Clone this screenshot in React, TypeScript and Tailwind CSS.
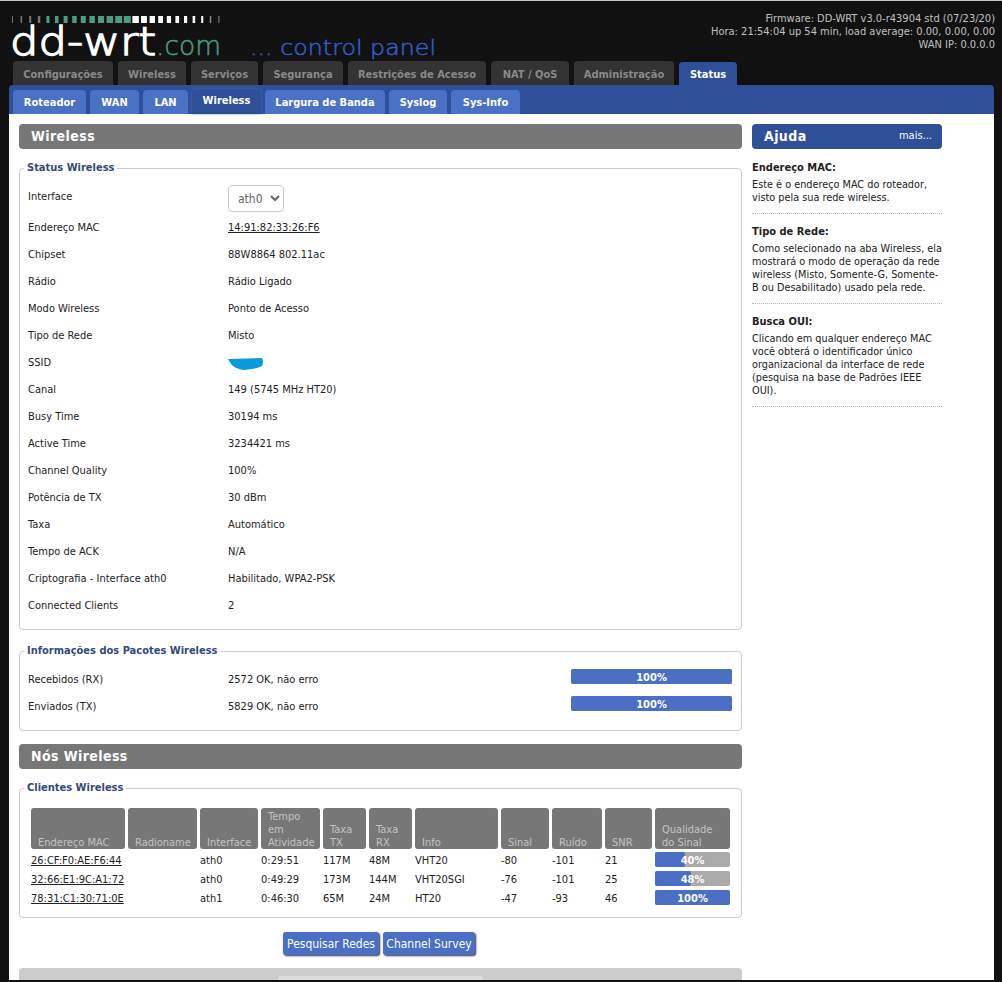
const mainTabs = [
  { label: 'Configurações', w: 'w-[100px]' },
  { label: 'Wireless', w: 'w-[68px]' },
  { label: 'Serviços', w: 'w-[67px]' },
  { label: 'Segurança', w: 'w-[80px]' },
  { label: 'Restrições de Acesso', w: 'w-[138px]' },
  { label: 'NAT / QoS', w: 'w-[78px]' },
  { label: 'Administração', w: 'w-[100px]' },
]

const subTabs = [
  { label: 'Roteador', w: 'w-[73px]' },
  { label: 'WAN', w: 'w-[49px]' },
  { label: 'LAN', w: 'w-[45px]' },
  { label: 'Wireless', w: 'w-[69px]', active: true },
  { label: 'Largura de Banda', w: 'w-[120px]' },
  { label: 'Syslog', w: 'w-[58px]' },
  { label: 'Sys-Info', w: 'w-[69px]' },
]

const statusRows = [
  ['Chipset', '88W8864 802.11ac'],
  ['Rádio', 'Rádio Ligado'],
  ['Modo Wireless', 'Ponto de Acesso'],
  ['Tipo de Rede', 'Misto'],
  ['SSID', ''],
  ['Canal', '149 (5745 MHz HT20)'],
  ['Busy Time', '30194 ms'],
  ['Active Time', '3234421 ms'],
  ['Channel Quality', '100%'],
  ['Potência de TX', '30 dBm'],
  ['Taxa', 'Automático'],
  ['Tempo de ACK', 'N/A'],
  ['Criptografia - Interface ath0', 'Habilitado, WPA2-PSK'],
  ['Connected Clients', '2'],
]

const clientHeaders = [
  ['Endereço MAC'],
  ['Radioname'],
  ['Interface'],
  ['Tempo', 'em', 'Atividade'],
  ['Taxa', 'TX'],
  ['Taxa', 'RX'],
  ['Info'],
  ['Sinal'],
  ['Ruído'],
  ['SNR'],
  ['Qualidade', 'do Sinal'],
]

const clients = [
  { mac: '26:CF:F0:AE:F6:44', iface: 'ath0', up: '0:29:51', tx: '117M', rx: '48M', info: 'VHT20', sig: '-80', noise: '-101', snr: '21', q: 40 },
  { mac: '32:66:E1:9C:A1:72', iface: 'ath0', up: '0:49:29', tx: '173M', rx: '144M', info: 'VHT20SGI', sig: '-76', noise: '-101', snr: '25', q: 48 },
  { mac: '78:31:C1:30:71:0E', iface: 'ath1', up: '0:46:30', tx: '65M', rx: '24M', info: 'HT20', sig: '-47', noise: '-93', snr: '46', q: 100 },
]

const COLS = 'grid grid-cols-[94px_69px_58px_59px_43px_43px_83px_48px_50px_47px_75px] gap-x-[3px]'

// Tick strip above the logo
function logoTicks() {
  const ticks = []
  for (let i = 0; i < 25; i++) {
    const w = i < 13 ? 1 + i * 0.5 : Math.max(1, 7 - (i - 13) * 0.55)
    const fill = i < 4 ? '#777' : i < 14 ? '#4f9a85' : '#fff'
    ticks.push(<rect key={i} x={12 + i * 8.6} y={15} width={w} height={7} fill={i > 22 ? '#888' : fill} />)
  }
  return ticks
}

function Logo() {
  return (
    <svg width="450" height="60" viewBox="0 0 450 60" className="shrink-0 overflow-visible font-stretch-normal">
      {logoTicks()}
      <text x="10" y="54" fontFamily="'DejaVu Sans', sans-serif" fontWeight="200" fontSize="39" fill="#fff" stroke="#fff" strokeWidth="1.4" textLength="146" lengthAdjust="spacingAndGlyphs">dd-wrt</text>
      <text x="156" y="54" fontFamily="'DejaVu Sans', sans-serif" fontWeight="200" fontSize="27" fill="#4f9a85" stroke="#4f9a85" strokeWidth="0.5" textLength="65" lengthAdjust="spacingAndGlyphs">.com</text>
      <text x="250" y="54" fontFamily="'DejaVu Sans', sans-serif" fontWeight="200" fontSize="22" fill="#2f5fc8" stroke="#2f5fc8" strokeWidth="0.5" textLength="186" lengthAdjust="spacingAndGlyphs">... control panel</text>
    </svg>
  )
}

function SectionTitle({ children }: { children: string }) {
  return (
    <div className="h-[25px] rounded-[4px] bg-[#777777] pl-[12px] text-[14px] leading-[25px] font-bold tracking-[0.4px] text-white">
      {children}
    </div>
  )
}

function Box({ title, className, children }: { title: string; className: string; children: React.ReactNode }) {
  return (
    <fieldset className={`rounded-[4px] border border-[#cccccc] pl-2 ${className}`}>
      <legend className="ml-[-4px] px-[3px] text-[11px] leading-[14px] font-bold text-[#34497a]">{title}</legend>
      {children}
    </fieldset>
  )
}

function Row({ label, children }: { label: string; children?: React.ReactNode }) {
  return (
    <div className="flex h-[27px] items-center">
      <span className="w-[200px] shrink-0">{label}</span>
      {children}
    </div>
  )
}

function Bar({ percent, className }: { percent: number; className: string }) {
  return (
    <div className={`relative rounded-[2px] bg-[#aaaaaa] ${className}`}>
      <div className="h-full rounded-[2px] bg-[#4a6fc4]" style={{ width: `${percent}%` }} />
      <span className="absolute inset-0 text-center leading-[17px] font-bold text-white">{percent}%</span>
    </div>
  )
}

function HelpItem({ title, lines }: { title: string; lines: string[] }) {
  return (
    <div className="mb-[11px] border-b border-dotted border-[#bbbbbb] pb-[9px]">
      <h4 className="mb-[3px] text-[11px] leading-[14px] font-bold text-[#222]">{title}</h4>
      {lines.map((l) => (
        <div key={l} className="text-[10.8px] leading-[13px] whitespace-nowrap">{l}</div>
      ))}
    </div>
  )
}

export default function App() {
  return (
    <div className="h-[982px] overflow-hidden border-t border-[#cccccc] bg-[#111111] font-['DejaVu_Sans',sans-serif] text-[11px] font-stretch-condensed text-[#222]">
      <header className="flex h-[60px] justify-between pr-[7px]">
        <Logo />
        <div className="pt-[11px] text-right text-[11px] leading-[13px] text-[#c0c0c0]">
          <div>Firmware: DD-WRT v3.0-r43904 std (07/23/20)</div>
          <div>Hora: 21:54:04 up 54 min, load average: 0.00, 0.00, 0.00</div>
          <div>WAN IP: 0.0.0.0</div>
        </div>
      </header>

      <nav className="flex h-[24px] items-end gap-[5px] pl-[13px]">
        {mainTabs.map((t) => (
          <div key={t.label} className={`h-[24px] rounded-t-[4px] bg-[#333333] text-center text-[11px] leading-[27px] font-bold text-[#8a8a8a] ${t.w}`}>
            {t.label}
          </div>
        ))}
        <div className="h-[23px] w-[58px] rounded-t-[4px] bg-[#2f5099] text-center text-[11px] leading-[26px] font-bold text-white">Status</div>
      </nav>

      <div className="mr-[8px] ml-[9px] h-[895px] overflow-hidden rounded-t-[4px] bg-[#2f5099]">
        <div className="flex h-[29px] items-end gap-[4px] pl-[4px]">
          {subTabs.map((t) => (
            <div
              key={t.label}
              className={`rounded-t-[4px] text-center text-[11px] font-bold text-white ${t.w} ${
                t.active ? 'h-[25px] bg-[#2f5099] leading-[24px] shadow-[0_0_2px_#4a6fc4]' : 'h-[24px] bg-[#4a72c4] leading-[26px]'
              }`}
            >
              {t.label}
            </div>
          ))}
        </div>

        <div className="flex h-[866px] gap-[10px] overflow-hidden bg-white px-[10px] pt-[10px]">
          <main className="w-[723px] shrink-0">
            <SectionTitle>Wireless</SectionTitle>

            <Box title="Status Wireless" className="mt-[12px] pb-[9px]">
              <div className="flex h-[40px] pt-[10px]">
                <span className="mt-[4px] w-[200px] shrink-0">Interface</span>
                <select className="h-[27px] w-[56px] rounded-[4px] border border-[#cccccc] bg-white pl-[5px] text-[12px] text-[#666]">
                  <option>ath0</option>
                </select>
              </div>
              <Row label="Endereço MAC">
                <a className="underline">14:91:82:33:26:F6</a>
              </Row>
              {statusRows.map(([label, value]) => (
                <Row key={label} label={label}>
                  {label === 'SSID' ? (
                    <svg width="36" height="12" viewBox="0 0 36 12">
                      <path d="M0 1 L34 0 Q36 4 34 8 Q28 11 16 12 Q9 11 5 8 L3 6 L0 1Z" fill="#0a9ade" />
                    </svg>
                  ) : (
                    value
                  )}
                </Row>
              ))}
            </Box>

            <Box title="Informações dos Pacotes Wireless" className="mt-[14px] pb-[9px]">
              <div className="pt-[9px]">
                <Row label="Recebidos (RX)">
                  <span className="w-[343px]">2572 OK, não erro</span>
                  <Bar percent={100} className="-mt-[9px] h-[15px] w-[161px]" />
                </Row>
                <Row label="Enviados (TX)">
                  <span className="w-[343px]">5829 OK, não erro</span>
                  <Bar percent={100} className="-mt-[9px] h-[15px] w-[161px]" />
                </Row>
              </div>
            </Box>

            <div className="mt-[13px]">
              <SectionTitle>Nós Wireless</SectionTitle>
            </div>

            <Box title="Clientes Wireless" className="mt-[12px] pb-[8px]">
              <div className="mt-[13px] pl-[3px]">
                <div className={COLS}>
                  {clientHeaders.map((h) => (
                    <div key={h[0] + h[1]} className="flex h-[41px] flex-col justify-end rounded-[3px] bg-[#777777] pl-[7px] text-[11px] leading-[13px] text-[#c4c4c4]">
                      {h.map((line) => (
                        <div key={line}>{line}</div>
                      ))}
                    </div>
                  ))}
                </div>
                <div className="mt-[3px]">
                  {clients.map((c) => (
                    <div key={c.mac} className={`${COLS} h-[19px] items-center`}>
                      <a className="underline">{c.mac}</a>
                      <span />
                      <span>{c.iface}</span>
                      <span>{c.up}</span>
                      <span>{c.tx}</span>
                      <span>{c.rx}</span>
                      <span>{c.info}</span>
                      <span>{c.sig}</span>
                      <span>{c.noise}</span>
                      <span>{c.snr}</span>
                      <Bar percent={c.q} className="-mt-[4px] h-[15px]" />
                    </div>
                  ))}
                </div>
              </div>
            </Box>

            <div className="mt-[14px] flex justify-center gap-[4px] pr-[3px]">
              <button className="h-[23px] w-[96px] rounded-[3px] bg-[#4a6fc4] text-[12px] text-white shadow-[1px_1px_2px_#334]">Pesquisar Redes</button>
              <button className="h-[23px] w-[92px] rounded-[3px] bg-[#4a6fc4] text-[12px] text-white shadow-[1px_1px_2px_#334]">Channel Survey</button>
            </div>

            <div className="mt-[13px] h-[25px] rounded-[4px] bg-[#cccccc] pt-[8px] pl-[259px]">
              <div className="h-[8px] w-[205px] rounded-t-[3px] bg-[#dddddd]" />
            </div>
          </main>

          <aside className="w-[190px] shrink-0">
            <div className="mb-[12px] flex h-[25px] items-center justify-between rounded-[4px] bg-[#2f5099] pr-[10px] pl-[12px] text-white">
              <span className="text-[14px] font-bold tracking-[0.4px]">Ajuda</span>
              <span>mais...</span>
            </div>
            <div>
              <HelpItem title="Endereço MAC:" lines={['Este é o endereço MAC do roteador,', 'visto pela sua rede wireless.']} />
              <HelpItem title="Tipo de Rede:" lines={['Como selecionado na aba Wireless, ela', 'mostrará o modo de operação da rede', 'wireless (Misto, Somente-G, Somente-', 'B ou Desabilitado) usado pela rede.']} />
              <HelpItem title="Busca OUI:" lines={['Clicando em qualquer endereço MAC', 'você obterá o identificador único', 'organizacional da interface de rede', '(pesquisa na base de Padrões IEEE', 'OUI).']} />
            </div>
          </aside>
        </div>
      </div>
    </div>
  )
}
